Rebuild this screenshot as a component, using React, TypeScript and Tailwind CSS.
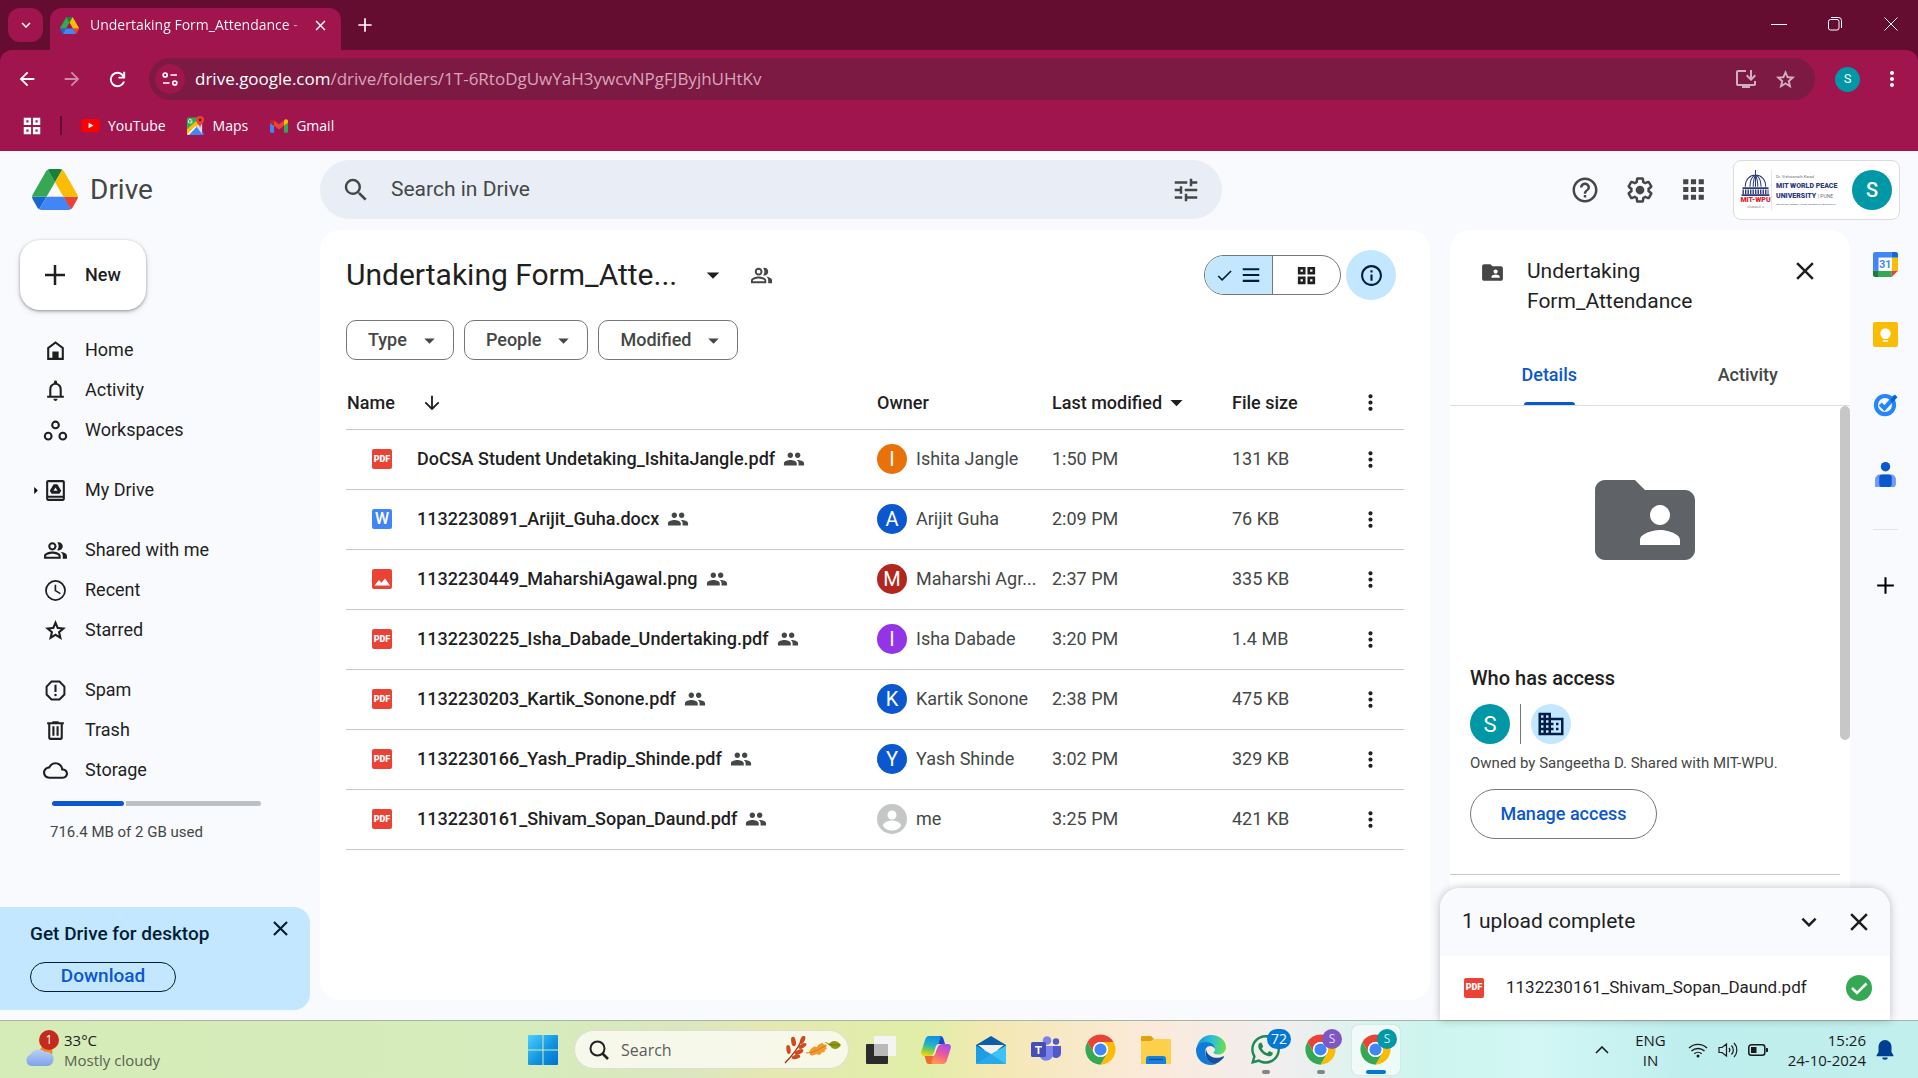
import type { ReactNode } from "react";
import { MdPeople, MdFolderShared, MdMoreVert, MdArrowDropDown, MdSearch, MdApps, MdHelpOutline } from "react-icons/md";
import { FaWhatsapp } from "react-icons/fa";

type P = { className?: string };

const Svg = ({ d, className = "size-6", box = "0 0 24 24" }: { d: string; className?: string; box?: string }) => (
  <svg viewBox={box} className={className} fill="currentColor" aria-hidden="true">
    <path fillRule="evenodd" d={d} />
  </svg>
);

const paths = {
  home: "M4 21V9l8-6 8 6v12H4zM6 10v9h3v-6h6v6h3v-9l-6-4.500z",
  bell: "M12 22c1.100 0 2-.9 2-2h-4c0 1.100.9 2 2 2zm6-6v-5c0-3.070-1.630-5.640-4.500-6.320V4c0-.83-.67-1.500-1.500-1.500s-1.500.67-1.500 1.500v.68C7.640 5.360 6 7.920 6 11v6H4v2h16v-2h-2v-1zm-2 1H8v-6c0-2.480 1.510-4.500 4-4.500s4 2.020 4 4.500v6z",
  workspaces:
    "M12 2.500a4.200 4.200 0 1 0 0 8.400 4.200 4.200 0 0 0 0-8.400zm0 2a2.200 2.200 0 1 1 0 4.400 2.200 2.200 0 0 1 0-4.400zM5 13.200a4.200 4.200 0 1 0 0 8.400 4.200 4.200 0 0 0 0-8.400zm0 2a2.200 2.200 0 1 1 0 4.400 2.200 2.200 0 0 1 0-4.400zM19 13.200a4.200 4.200 0 1 0 0 8.400 4.200 4.200 0 0 0 0-8.400zm0 2a2.200 2.200 0 1 1 0 4.400 2.200 2.200 0 0 1 0-4.400z",
  drive:
    "M19 2H5C3.900 2 3 2.900 3 4v16c0 1.100.9 2 2 2h14c1.100 0 2-.9 2-2V4c0-1.100-.9-2-2-2zm0 18H5v-1h14v1zm0-3H5V4h14v13zM10.200 6h3.600l3.700 6.200L15.700 15H8.300l-1.800-2.800L10.200 6zm1.800 3.100L10.100 12.300h3.800L12 9.100z",
  shared:
    "M15 8c0-1.420-.5-2.730-1.330-3.760.42-.14.86-.24 1.330-.24 2.210 0 4 1.790 4 4s-1.790 4-4 4c-.43 0-.84-.09-1.230-.21-.03-.01-.06-.02-.1-.03A5.980 5.980 0 0 0 15 8zm1.660 5.130C18.030 14.060 19 15.320 19 17v3h4v-3c0-2.180-3.580-3.470-6.340-3.870zM9 6a2 2 0 1 0 0 4 2 2 0 0 0 0-4m0 9c-2.700 0-5.800 1.290-6 2.010V18h12v-1c-.2-.71-3.300-2-6-2M9 4c2.210 0 4 1.790 4 4s-1.790 4-4 4-4-1.790-4-4 1.790-4 4-4zm0 9c2.670 0 8 1.340 8 4v3H1v-3c0-2.660 5.330-4 8-4z",
  recent:
    "M12 2a10 10 0 1 0 0 20 10 10 0 0 0 0-20zm0 18.300a8.300 8.300 0 1 1 0-16.600 8.300 8.300 0 0 1 0 16.600zM12.700 6.500h-1.600v6l5.200 3.200.8-1.300-4.400-2.700z",
  star: "M12 7.130l.97 2.290.47 1.110 1.200.1 2.470.21-1.880 1.630-.91.790.27 1.180.56 2.410-2.120-1.280-1.030-.64-1.030.62-2.120 1.280.56-2.410.27-1.180-.91-.79-1.880-1.630 2.470-.21 1.200-.1.47-1.110.97-2.270M12 2L9.190 8.630 2 9.240l5.460 4.730L5.820 21 12 17.270 18.180 21l-1.640-7.030L22 9.240l-7.190-.61L12 2z",
  spam: "M16.200 2.500H7.800L2.500 7.800v8.400l5.300 5.300h8.400l5.300-5.300V7.800L16.200 2.500zm3.400 12.900-4.200 4.200H8.600l-4.200-4.200V8.600l4.200-4.200h6.800l4.200 4.200v6.800zM11 6.500h2v7h-2zM12 15a1.200 1.200 0 1 0 0 2.400 1.200 1.200 0 0 0 0-2.400z",
  trash: "M15 4V3H9v1H4v2h1v13c0 1.100.9 2 2 2h10c1.100 0 2-.9 2-2V6h1V4h-5zm2 15H7V6h10v13zM9 8h2v9H9zm4 0h2v9h-2z",
  cloud:
    "M19.350 10.040C18.670 6.590 15.640 4 12 4 9.110 4 6.600 5.640 5.350 8.040 2.340 8.360 0 10.910 0 14c0 3.310 2.690 6 6 6h13c2.760 0 5-2.240 5-5 0-2.640-2.050-4.780-4.650-4.960zM19 18H6c-2.210 0-4-1.790-4-4s1.790-4 4-4h.71C7.370 7.690 9.480 6 12 6c3.040 0 5.500 2.460 5.500 5.500v.5H19c1.660 0 3 1.340 3 3s-1.340 3-3 3z",
  plus: "M20 13h-7v7h-2v-7H4v-2h7V4h2v7h7v2z",
  close: "M19 6.410L17.590 5 12 10.590 6.410 5 5 6.410 10.590 12 5 17.590 6.410 19 12 13.410 17.590 19 19 17.590 13.410 12z",
  down: "M7.410 8.590L12 13.170l4.590-4.580L18 10l-6 6-6-6z",
  arrowDown: "M20 12l-1.410-1.410L13 16.170V4h-2v12.170l-5.580-5.590L4 12l8 8z",
  grid: "M3 3v8h8V3H3zm5.200 5.200H5.800V5.800h2.400v2.400zM3 13v8h8v-8H3zm5.200 5.200H5.800v-2.400h2.400v2.400zM13 3v8h8V3h-8zm5.200 5.200h-2.400V5.800h2.400v2.400zM13 13v8h8v-8h-8zm5.200 5.200h-2.400v-2.400h2.400v2.400z",
  gear: "M13.850 22.250h-3.700c-.74 0-1.360-.54-1.450-1.270l-.27-1.890c-.27-.14-.53-.29-.79-.46l-1.800.72c-.7.260-1.470-.03-1.810-.65L2.200 15.530c-.35-.66-.2-1.440.36-1.880l1.530-1.190c-.01-.15-.02-.3-.02-.46 0-.15.010-.31.020-.46l-1.520-1.190c-.59-.45-.74-1.260-.37-1.880l1.850-3.190c.34-.62 1.110-.9 1.790-.63l1.810.73c.26-.17.52-.32.78-.46l.27-1.910c.09-.7.71-1.250 1.440-1.250h3.700c.74 0 1.360.54 1.450 1.270l.27 1.890c.27.140.53.290.79.460l1.800-.72c.71-.26 1.480.03 1.820.65l1.840 3.180c.36.660.2 1.440-.36 1.880l-1.520 1.190c.01.150.020.300.020.460s-.01.310-.02.460l1.520 1.190c.56.450.72 1.230.37 1.860l-1.860 3.220c-.34.620-1.110.9-1.800.63l-1.800-.72c-.26.170-.52.320-.78.460l-.27 1.910c-.1.680-.72 1.220-1.460 1.220zm-3.230-2h2.760l.37-2.550.53-.22c.44-.18.88-.44 1.340-.78l.45-.34 2.380.96 1.380-2.400-2.030-1.580.07-.56c.03-.26.060-.51.060-.78s-.03-.53-.06-.78l-.07-.56 2.030-1.580-1.390-2.400-2.390.96-.45-.35c-.42-.32-.87-.58-1.330-.77l-.52-.22-.37-2.550h-2.760l-.37 2.550-.53.210c-.44.190-.88.440-1.340.79l-.45.330-2.380-.95-1.390 2.390 2.030 1.580-.07.560a7 7 0 0 0-.06.790c0 .26.020.53.060.78l.07.560-2.030 1.580 1.380 2.400 2.390-.96.450.35c.43.330.860.580 1.330.77l.53.220.38 2.550zM12 8.500a3.500 3.500 0 1 0 0 7 3.500 3.500 0 0 0 0-7z",
  tune: "M3 17v2h6v-2H3zM3 5v2h10V5H3zm10 16v-2h8v-2h-8v-2h-2v6h2zM7 9v2H3v2h4v2h2V9H7zm14 4v-2H11v2h10zm-6-4h2V7h4V5h-4V3h-2v6z",
  check: "M9 16.200L4.800 12l-1.400 1.400L9 19 21 7l-1.400-1.400L9 16.200z",
  lines: "M3 4.500h18v2.200H3zM3 10.900h18v2.200H3zM3 17.300h18v2.200H3z",
  info: "M11 17h2v-6h-2v6zm1-15C6.480 2 2 6.480 2 12s4.480 10 10 10 10-4.480 10-10S17.520 2 12 2zm0 18c-4.410 0-8-3.590-8-8s3.590-8 8-8 8 3.590 8 8-3.590 8-8 8zM11 9h2V7h-2v2z",
  building:
    "M12 7V3H2v18h20V7H12zM6 19H4v-2h2v2zm0-4H4v-2h2v2zm0-4H4V9h2v2zm0-4H4V5h2v2zm4 12H8v-2h2v2zm0-4H8v-2h2v2zm0-4H8V9h2v2zm0-4H8V5h2v2zm10 12h-8v-2h2v-2h-2v-2h2v-2h-2V9h8v10zm-2-8h-2v2h2v-2zm0 4h-2v2h2v-2z",
  back: "M20 11H7.830l5.590-5.590L12 4l-8 8 8 8 1.410-1.410L7.830 13H20v-2z",
  forward: "M12 4l-1.410 1.410L16.170 11H4v2h12.170l-5.580 5.590L12 20l8-8z",
  reload: "M12 20q-3.350 0-5.670-2.320T4 12t2.330-5.680T12 4q1.730 0 3.300.71T18 6.750V4h2v7h-7V9h4.200q-.8-1.400-2.190-2.200T12 6Q9.500 6 7.750 7.750T6 12t1.750 4.250T12 18q1.930 0 3.480-1.100T17.650 14h2.100q-.7 2.650-2.850 4.330T12 20z",
  install: "M8 21v-2H4q-.82 0-1.410-.59T2 17V5q0-.82.59-1.410T4 3h8v2H4v12h16v-3h2v3q0 .82-.59 1.410T20 19h-4v2H8zm9-7-5-5 1.400-1.400 2.600 2.570V3h2v7.170l2.600-2.570L22 9z",
};

const DriveLogo = ({ className }: P) => (
  <svg viewBox="0 0 87.3 78" className={className} aria-hidden="true">
    <path d="m6.600 66.850 3.850 6.650c.8 1.400 1.950 2.500 3.300 3.300l13.750-23.800h-27.500c0 1.550.4 3.100 1.200 4.500z" fill="#1967d2" />
    <path d="m43.650 25-13.750-23.800c-1.350.8-2.500 1.900-3.300 3.300l-25.400 44a9.060 9.060 0 0 0 -1.200 4.500h27.500z" fill="#34a853" />
    <path d="m73.550 76.800c1.350-.8 2.500-1.900 3.300-3.300l1.600-2.750 7.650-13.250c.8-1.400 1.200-2.950 1.200-4.500h-27.502l5.852 11.500z" fill="#ea4335" />
    <path d="m43.650 25 13.750-23.800c-1.350-.8-2.900-1.200-4.500-1.200h-18.500c-1.600 0-3.150.45-4.500 1.200z" fill="#188038" />
    <path d="m59.800 53h-32.300l-13.750 23.800c1.350.8 2.900 1.200 4.500 1.200h50.800c1.600 0 3.150-.45 4.500-1.200z" fill="#4285f4" />
    <path d="m73.400 26.500-12.700-22c-.8-1.400-1.950-2.500-3.300-3.300l-13.750 23.800 16.150 28h27.450c0-1.550-.4-3.100-1.200-4.500z" fill="#fbbc04" />
  </svg>
);

const YouTube = () => (
  <svg viewBox="0 0 20 14" className="h-[13px] w-[19px]" aria-hidden="true">
    <rect width="20" height="14" rx="3.500" fill="#f00" />
    <path d="M8 4l5.200 3L8 10z" fill="#fff" />
  </svg>
);

const Maps = () => (
  <svg viewBox="0 0 20 20" className="size-[19px]" aria-hidden="true">
    <path d="M1 3.500A2 2 0 0 1 3 1.500h9L1 13z" fill="#34a853" />
    <path d="M1 2h11v9L1 19z" fill="#34a853" />
    <path d="M1 19 10 10l9 9-1 1H2z" fill="#4285f4" />
    <path d="M1 18.500V14L11 5l2 4L2 19.500z" fill="#fbbc04" />
    <path d="M1 19.500 10 10.500l1 1-8 8.500z" fill="#fff" />
    <path d="M10.500 10.500 17 7v12z" fill="#dadce0" />
    <path d="M14.800 0a4.200 4.200 0 0 0-4.200 4.200c0 3 3.400 4 4.200 8.300.8-4.300 4.200-5.300 4.200-8.300A4.200 4.200 0 0 0 14.800 0z" fill="#ea4335" />
    <circle cx="14.800" cy="4.200" r="1.500" fill="#811411" />
    <path d="M6.500 5.300H4.600m1.900 0A2 2 0 1 1 5.800 4" stroke="#fff" strokeWidth=".9" fill="none" />
  </svg>
);

const Gmail = () => (
  <svg viewBox="52 42 88 66" className="h-[14px] w-[18px]" aria-hidden="true">
    <path fill="#4285f4" d="M58 108h14V74L52 59v43c0 3.320 2.690 6 6 6" />
    <path fill="#34a853" d="M120 108h14c3.320 0 6-2.690 6-6V59l-20 15" />
    <path fill="#fbbc04" d="M120 48v26l20-15v-8c0-7.420-8.470-11.650-14.400-7.200" />
    <path fill="#ea4335" d="M72 74V48l24 18 24-18v26L96 92" />
    <path fill="#c5221f" d="M52 51v8l20 15V48l-5.600-4.200c-5.940-4.450-14.400-.22-14.400 7.200" />
  </svg>
);

const Chrome = () => (
  <svg viewBox="0 0 48 48" className="size-[33px]" aria-hidden="true">
    <path fill="#ea4335" d="M4.950 13A22 22 0 0 1 43.050 13H24A11 11 0 0 0 14.470 29.500z" />
    <path fill="#fbbc04" d="M43.050 13A22 22 0 0 1 24 46L33.530 29.500A11 11 0 0 0 24 13z" />
    <path fill="#34a853" d="M24 46A22 22 0 0 1 4.950 13L14.470 29.500A11 11 0 0 0 33.530 29.500z" />
    <circle cx="24" cy="24" r="11" fill="#fff" />
    <circle cx="24" cy="24" r="8.800" fill="#4285f4" />
  </svg>
);

const Windows = () => (
  <svg viewBox="0 0 30 30" className="size-[30px]" aria-hidden="true">
    <defs>
      <linearGradient id="win" x1="0" y1="0" x2="1" y2="1">
        <stop offset="0" stopColor="#4cd0ff" />
        <stop offset=".55" stopColor="#1394e0" />
        <stop offset="1" stopColor="#0072d0" />
      </linearGradient>
    </defs>
    <path fill="url(#win)" d="M1 0h13.500v14.500H0V1a1 1 0 0 1 1-1zM15.500 0H29a1 1 0 0 1 1 1v13.500H15.500zM0 15.500h14.500V30H1a1 1 0 0 1-1-1zM15.500 15.500H30V29a1 1 0 0 1-1 1H15.500z" />
  </svg>
);

const Leaves = () => (
  <svg viewBox="0 0 58 28" className="h-7 w-[58px]" aria-hidden="true">
    <path d="M1 27C8 20 14 12 18 4" stroke="#a3341c" strokeWidth="1.400" fill="none" />
    <g fill="#cf4a1c">
      <ellipse cx="9.500" cy="5.500" rx="2.300" ry="4.800" transform="rotate(-10 9.500 5.500)" />
      <ellipse cx="18.500" cy="4" rx="2.200" ry="4.500" transform="rotate(25 18.500 4)" />
      <ellipse cx="4.500" cy="13.500" rx="2.100" ry="4.500" transform="rotate(-8 4.500 13.500)" />
      <ellipse cx="18.500" cy="10" rx="1.900" ry="4.400" transform="rotate(60 18.500 10)" />
      <ellipse cx="15" cy="16" rx="2.100" ry="4.600" transform="rotate(65 15 16)" />
      <ellipse cx="12" cy="21" rx="2" ry="4.400" transform="rotate(78 12 21)" />
    </g>
    <path d="M19 17c3-1 4-1 6-1 1-3 4-5 6-6 0 1 1 1 2 1 1-3 4-4 6-4 0 2 2 1 4 2-1 2-1 3 0 4-2 0-3 2-2 3-3 0-4 1-5 3-2 0-3-1-4-1-1 1-4 2-6 1 0-1 0-2-1-3-2 0-4 1-6 1z" fill="#f49a2c" />
    <path d="M22 17c8 0 13-4 19-7" stroke="#c86a14" strokeWidth=".7" fill="none" />
    <path d="M40 6c2 0 3 0 5 2 3-4 8-4 12 1-3 5-8 5-11 1-2-2-3-3-6-4z" fill="#8f9a12" />
    <path d="M44 8c4 1 8 1 12 1" stroke="#5f6a08" strokeWidth=".7" fill="none" />
  </svg>
);

const TaskView = () => (
  <svg viewBox="0 0 30 28" className="h-7 w-[30px]" aria-hidden="true">
    <rect x="0" y="8" width="22" height="20" rx="1" fill="#2b2b2b" />
    <rect x="8" y="0" width="22" height="20" rx="1" fill="#f4f4f4" />
    <rect x="8" y="8" width="14" height="12" fill="#b9b9b9" />
  </svg>
);

const Copilot = () => (
  <svg viewBox="0 0 30 28" className="h-7 w-[30px]" aria-hidden="true">
    <defs>
      <linearGradient id="cpa" x1=".5" y1="0" x2=".3" y2="1">
        <stop offset="0" stopColor="#1090e8" />
        <stop offset=".45" stopColor="#24b6c0" />
        <stop offset=".75" stopColor="#8ccf3c" />
        <stop offset="1" stopColor="#fcd116" />
      </linearGradient>
      <linearGradient id="cpb" x1=".7" y1="0" x2=".3" y2="1">
        <stop offset="0" stopColor="#a44cf0" />
        <stop offset=".5" stopColor="#ee5a9a" />
        <stop offset="1" stopColor="#ff9a4a" />
      </linearGradient>
    </defs>
    <path d="M15 0h4c2 0 3 1 3.500 3L24 8h-7z" fill="#1a46c8" />
    <path d="M8 28c-2 0-2.500-1-3-3l-1.500-5H13l-1 8z" fill="#f06a30" />
    <path d="M8 0h9c2 0 3 1 2.500 2.500C17 7 15 20 9 20H3c-2.500 0-3.500-2-2.500-5L4 4c.8-2.500 2-4 4-4z" fill="url(#cpa)" />
    <path d="M22 28h-9c-2 0-3-1-2.500-2.500C13 21 15 8 21 8h6c2.500 0 3.500 2 2.500 5L26 24c-.8 2.500-2 4-4 4z" fill="url(#cpb)" />
    <path d="M15 10c1-1.500 2-2 3.500-2-2 2-3 6-4 9-.6 2-1.500 3-3.500 3 2-2 2.800-7 4-10z" fill="#f3efc2" />
  </svg>
);

const Mail = () => (
  <svg viewBox="0 0 30 28" className="h-7 w-[30px]" aria-hidden="true">
    <path d="M0 9 15 0l15 9v5H0z" fill="#0b5fa8" />
    <path d="M2 9h26L15 19z" fill="#f2f2f2" />
    <path d="M0 9.500 15 18 30 28H1a1 1 0 0 1-1-1z" fill="#1c9de4" />
    <path d="M30 9.500V27a1 1 0 0 1-1 1L15 18z" fill="#3cc3f5" />
    <path d="M0 28 15 18l15 10z" fill="#28a9ea" />
  </svg>
);

const Teams = () => (
  <svg viewBox="0 0 30 27" className="h-[27px] w-[30px]" aria-hidden="true">
    <circle cx="16" cy="4.500" r="4.300" fill="#7b83eb" />
    <circle cx="25" cy="5.500" r="3.200" fill="#5059c9" />
    <path d="M21 10h9v7a5 5 0 0 1-9 3z" fill="#5059c9" />
    <path d="M9 10h13v9a7 7 0 0 1-13 2z" fill="#7b83eb" />
    <rect y="6" width="15" height="15" rx="1.500" fill="#464eb8" />
    <path d="M4 10h7v1.600H8.400V18H6.600v-6.400H4z" fill="#fff" />
  </svg>
);

const Folder = () => (
  <svg viewBox="0 0 30 28" className="h-7 w-[30px]" aria-hidden="true">
    <path d="M0 1.500C0 .6.6 0 1.500 0H10l3 3-3 3H0z" fill="#e0a010" />
    <path d="M0 5h9.500L13 3h15.500c.9 0 1.500.6 1.500 1.500V28H0z" fill="#fcd04b" />
    <path d="M5 28v-5c0-2 1-3 3-3h14c2 0 3 1 3 3v5z" fill="#1681d8" />
    <path d="M8 23.500h14" stroke="#0a4f9a" strokeWidth="1.200" />
  </svg>
);

const Edge = () => (
  <svg viewBox="0 0 30 30" className="size-[30px]" aria-hidden="true">
    <defs>
      <linearGradient id="eda" x1="0" y1=".3" x2="1" y2=".4">
        <stop offset="0" stopColor="#1b8fdc" />
        <stop offset=".5" stopColor="#2bc0d8" />
        <stop offset="1" stopColor="#6be04a" />
      </linearGradient>
    </defs>
    <path d="M1 12C2 5 8 0 15 0c9 0 15 6 15 12 0 5-4 7.500-8 7.500-3 0-4.500-1-4.500-2 0-.8 1.500-1.200 1.500-3.500 0-3-3-5-7-5-5 0-10 2-11 3z" fill="url(#eda)" />
    <path d="M0 15c0-5 5-8 10-8 5.500 0 9 3 9 7-1-2-3-3-5-3-3 0-5 3-5 6 0 5 4 10 11 12-2 .8-4 1-5 1C7 30 0 24 0 15z" fill="#0f7bd6" />
    <path d="M10 14c-2 6 1 13 9 15 3-.8 7-4 9-7 .3-.7-.2-1-.8-.7C20 25 11 22 10 14z" fill="#154f9e" />
  </svg>
);

const WeatherIcon = () => (
  <span className="relative block h-9 w-9">
    <svg viewBox="0 0 36 36" className="size-9" aria-hidden="true">
      <defs>
        <linearGradient id="cl" x1="0" y1="0" x2="0" y2="1">
          <stop offset="0" stopColor="#b9d0f8" />
          <stop offset="1" stopColor="#7ea2ea" />
        </linearGradient>
      </defs>
      <circle cx="22" cy="20" r="6.500" fill="#f8861e" />
      <path d="M7 34a6 6 0 0 1-.5-11.500A9 9 0 0 1 21 20a7 7 0 1 1 3 14z" fill="url(#cl)" />
    </svg>
    <span className="absolute -top-0.5 left-[15px] flex size-5 items-center justify-center rounded-full bg-[#c42b1c] text-xs text-white">1</span>
  </span>
);

const Avatar = ({ letter, className }: { letter: string; className: string }) => (
  <span className={`flex shrink-0 items-center justify-center rounded-full text-white ${className}`}>{letter}</span>
);

const FileBadge = ({ kind }: { kind: string }) => {
  if (kind === "image")
    return (
      <svg viewBox="0 0 20 20" className="size-5 shrink-0" role="img" aria-label="Image">
        <rect width="20" height="20" rx="2" fill="#ea4335" />
        <path d="M2.500 16.500 7 11l2.500 2.800L13 9.500l5 7z" fill="#fff" />
      </svg>
    );
  if (kind === "word")
    return <span className="flex size-5 shrink-0 items-center justify-center rounded-xs bg-[#4285f4] text-base font-medium text-white">W</span>;
  return <span className="flex size-5 shrink-0 items-center justify-center rounded-xs bg-[#ea4335] text-[9px] font-black text-white">PDF</span>;
};

const files = [
  { name: "DoCSA Student Undetaking_IshitaJangle.pdf", kind: "pdf", owner: "Ishita Jangle", letter: "I", color: "bg-[#e8710a]", time: "1:50 PM", size: "131 KB" },
  { name: "1132230891_Arijit_Guha.docx", kind: "word", owner: "Arijit Guha", letter: "A", color: "bg-[#0b57d0]", time: "2:09 PM", size: "76 KB" },
  { name: "1132230449_MaharshiAgawal.png", kind: "image", owner: "Maharshi Agr...", letter: "M", color: "bg-[#b3261e]", time: "2:37 PM", size: "335 KB" },
  { name: "1132230225_Isha_Dabade_Undertaking.pdf", kind: "pdf", owner: "Isha Dabade", letter: "I", color: "bg-[#9334e6]", time: "3:20 PM", size: "1.4 MB" },
  { name: "1132230203_Kartik_Sonone.pdf", kind: "pdf", owner: "Kartik Sonone", letter: "K", color: "bg-[#0b57d0]", time: "2:38 PM", size: "475 KB" },
  { name: "1132230166_Yash_Pradip_Shinde.pdf", kind: "pdf", owner: "Yash Shinde", letter: "Y", color: "bg-[#0b57d0]", time: "3:02 PM", size: "329 KB" },
  { name: "1132230161_Shivam_Sopan_Daund.pdf", kind: "pdf", owner: "me", letter: "", color: "", time: "3:25 PM", size: "421 KB" },
];

const navGroups: { label: string; d: string; caret?: boolean }[][] = [
  [
    { label: "Home", d: paths.home },
    { label: "Activity", d: paths.bell },
    { label: "Workspaces", d: paths.workspaces },
  ],
  [{ label: "My Drive", d: paths.drive, caret: true }],
  [
    { label: "Shared with me", d: paths.shared },
    { label: "Recent", d: paths.recent },
    { label: "Starred", d: paths.star },
  ],
  [
    { label: "Spam", d: paths.spam },
    { label: "Trash", d: paths.trash },
    { label: "Storage", d: paths.cloud },
  ],
];

function BrowserChrome() {
  return (
    <div className="bg-[#640d31] font-['Open_Sans',sans-serif] text-sm text-white">
      <div className="flex h-[50px] items-end pl-2">
        <button aria-label="Search tabs" className="mb-2 flex h-[34px] w-[35px] items-center justify-center rounded-xl bg-[#a0154e]">
          <Svg d={paths.down} className="size-[18px]" />
        </button>
        <div className="ml-[7px] flex h-[42px] w-[291px] items-center rounded-t-xl bg-[#a0154e] pb-2 pl-2.5 pr-[9px]">
          <DriveLogo className="size-[19px]" />
          <span className="ml-[11px] flex-1 overflow-hidden whitespace-nowrap bg-linear-to-r from-white from-90% to-transparent bg-clip-text text-transparent">
            Undertaking Form_Attendance -
          </span>
          <button aria-label="Close tab" className="flex w-6 justify-center">
            <Svg d={paths.close} className="size-[17px]" />
          </button>
        </div>
        <button aria-label="New tab" className="mb-[15px] ml-3.5">
          <Svg d={paths.plus} className="size-5" />
        </button>
        <div className="mb-[18px] ml-auto mr-[19px] flex items-center gap-10">
          <button aria-label="Minimize" className="flex size-4 items-center">
            <span className="h-px w-full bg-white" />
          </button>
          <button aria-label="Restore">
            <svg viewBox="0 0 16 16" className="size-4" fill="none" stroke="#fff" aria-hidden="true">
              <rect x="1.500" y="3.500" width="10.500" height="10.500" rx="2" />
              <path d="M4 1.500h7.500a3 3 0 0 1 3 3V12" />
            </svg>
          </button>
          <button aria-label="Close window">
            <svg viewBox="0 0 16 16" className="size-4" stroke="#fff" aria-hidden="true">
              <path d="M1.500 1.500l13 13M14.500 1.500l-13 13" />
            </svg>
          </button>
        </div>
      </div>
      <div className="rounded-t-xl bg-[#a0154e]">
        <div className="flex items-center pl-4 pr-3.5 pt-2">
          <button aria-label="Back"><Svg d={paths.back} className="size-[22px]" /></button>
          <button aria-label="Forward" className="ml-[23px] opacity-50"><Svg d={paths.forward} className="size-[22px]" /></button>
          <button aria-label="Reload" className="ml-[23px]"><Svg d={paths.reload} className="size-[23px]" /></button>
          <div className="ml-5 flex h-[42px] flex-1 items-center rounded-full bg-[#7c1a43] pl-1.5 pr-[18px]">
            <button aria-label="Site information" className="flex size-[30px] items-center justify-center rounded-full bg-[#a0154e]">
              <svg viewBox="0 0 16 16" className="size-4" fill="none" stroke="#fff" strokeWidth="1.700" aria-hidden="true">
                <circle cx="3.200" cy="4" r="2" />
                <path d="M8.500 4H15M1 12h6.500" />
                <circle cx="12.800" cy="12" r="2" />
              </svg>
            </button>
            <div role="textbox" aria-label="Address" className="ml-2.5 flex-1 text-[17px]/6 text-[#d8a5b9]">
              <span className="text-white">drive.google.com</span>/drive/folders/1T-6RtoDgUwYaH3ywcvNPgFJByjhUHtKv
            </div>
            <button aria-label="Install app" className="text-[#d0b0bd]"><Svg d={paths.install} className="size-6" /></button>
            <button aria-label="Bookmark" className="ml-4 text-[#d0b0bd]"><Svg d={paths.star} className="size-[23px]" /></button>
          </div>
          <Avatar letter="S" className="ml-5 size-[25px] bg-[#0097a7] font-['Roboto'] text-[13px]" />
          <button aria-label="Menu" className="ml-5"><MdMoreVert className="size-6" /></button>
        </div>
        <div className="flex h-[51px] items-center pl-[21px]">
          <Svg d={paths.grid} className="size-[22px]" />
          <span className="ml-[17px] h-[19px] w-0.5 bg-[#640d31]" />
          <a href="#youtube" className="ml-[19px] flex items-center gap-2"><YouTube />YouTube</a>
          <a href="#maps" className="ml-5 flex items-center gap-2"><Maps />Maps</a>
          <a href="#gmail" className="ml-[22px] flex items-center gap-2"><Gmail />Gmail</a>
        </div>
      </div>
    </div>
  );
}

const UniversityLogo = () => (
  <span className="flex items-center bg-white">
    <span className="flex w-8 flex-col items-center border-r border-gray-200">
      <svg viewBox="0 0 30 28" className="h-[26px] w-[29px]" fill="none" stroke="#2b3a7c" strokeWidth="1.100" aria-hidden="true">
        <path d="M15 0v5M4 18C4 10 9 5.500 15 5.500S26 10 26 18M9 18c0-6 2-11 6-12.500C19 7 21 12 21 18M15 6v12M12.500 18c0-5 .8-9 2.500-12 1.700 3 2.500 7 2.500 12" />
        <path d="M1 19.500h28M0 27h30" strokeWidth="2" />
        <path d="M1 23.500h28" strokeWidth="5" strokeDasharray="1.500 1.200" />
      </svg>
      <span className="whitespace-nowrap text-[7px]/[9px] font-black text-[#e0202c]">MIT-WPU</span>
      <span className="whitespace-nowrap text-[3px]/[5px] text-gray-600">॥ विश्वशांती ॥</span>
    </span>
    <span className="flex flex-col items-start pl-1 text-[#2b3a7c]">
      <span className="whitespace-nowrap text-[4px]/[8px] text-gray-500">Dr. Vishwanath Karad</span>
      <span className="whitespace-nowrap text-[7px]/[10px] font-black">MIT WORLD PEACE</span>
      <span className="whitespace-nowrap text-[7px]/[10px] font-black">
        UNIVERSITY <span className="text-[5px] font-normal text-gray-500">| PUNE</span>
      </span>
      <span className="whitespace-nowrap text-[2px]/[6px] text-gray-600">TECHNOLOGY, RESEARCH, SOCIAL INNOVATION &amp; PARTNERSHIPS</span>
    </span>
  </span>
);

function Header() {
  return (
    <header className="flex h-[79px] shrink-0 items-center pb-0.5 pr-[18px] text-[#444746]">
      <a href="#drive" className="flex w-80 shrink-0 items-center pl-8">
        <DriveLogo className="h-[41px] w-[46px]" />
        <span className="ml-3 text-[28px]">Drive</span>
      </a>
      <form role="search" className="flex h-[59px] max-w-[902px] flex-1 items-center rounded-full bg-[#e9eef6] pl-[21px] pr-[21px]">
        <MdSearch className="size-[30px]" />
        <input aria-label="Search in Drive" placeholder="Search in Drive" className="ml-5 flex-1 bg-transparent text-[21px] outline-none placeholder:text-[#444746]" />
        <button type="button" aria-label="Advanced search"><Svg d={paths.tune} className="size-[30px]" /></button>
      </form>
      <div className="ml-auto flex items-center">
        <button aria-label="Support"><MdHelpOutline className="size-[30px]" /></button>
        <button aria-label="Settings" className="ml-[25px]"><Svg d={paths.gear} className="size-[30px]" /></button>
        <button aria-label="Google apps" className="ml-[23px]"><MdApps className="size-[31px]" /></button>
        <button aria-label="Account" className="ml-6 flex h-[60px] w-[167px] items-center justify-between rounded-lg border border-[#dadce0] bg-white pl-1.5 pr-[7px]">
          <UniversityLogo />
          <Avatar letter="S" className="size-10 bg-[#0097a7] text-xl font-medium" />
        </button>
      </div>
    </header>
  );
}

function Sidebar() {
  return (
    <aside className="flex w-80 shrink-0 flex-col pt-2.5 text-[#1f1f1f]">
      <button className="ml-5 flex h-[70px] w-[126px] items-center gap-[15px] rounded-[20px] bg-white pl-5 text-lg font-medium shadow-[0_1px_3px_rgba(0,0,0,0.35),0_2px_6px_rgba(0,0,0,0.12)]">
        <Svg d={paths.plus} className="size-[30px]" />
        New
      </button>
      <nav className="mt-5 flex flex-col gap-5 text-lg">
        {navGroups.map((group, i) => (
          <ul key={i}>
            {group.map((item) => (
              <li key={item.label}>
                <a href={`#${item.label}`} className="flex h-10 items-center">
                  <span className="flex w-[43px] justify-end">
                    {item.caret && <svg viewBox="0 0 4 8" className="mr-[5px] h-[7px] w-1" aria-hidden="true"><path d="M0 0l4 4-4 4z" /></svg>}
                  </span>
                  <Svg d={item.d} className="size-[25px]" />
                  <span className="ml-[17px]">{item.label}</span>
                </a>
              </li>
            ))}
          </ul>
        ))}
      </nav>
      <div className="ml-[50px] mt-[11px] w-[211px]">
        <div className="flex h-[5px] gap-0.5 pl-0.5">
          <span className="w-[72px] rounded-full bg-[#0b57d0]" />
          <span className="flex-1 rounded-r-full bg-[#bdc1c6]" />
        </div>
        <p className="mt-[15px] text-[15px] text-[#444746]">716.4 MB of 2 GB used</p>
      </div>
      <div className="mb-2.5 mr-2.5 mt-auto flex h-[103px] justify-between rounded-r-2xl bg-[#c2e7ff] pl-[30px] pr-[17px] pt-[15px] text-[#001d35]">
        <div className="flex flex-col items-start">
          <p className="text-[19px]/6 font-medium">Get Drive for desktop</p>
          <button className="mt-4 flex h-[30px] w-[146px] items-center justify-center rounded-full border border-[#001d35] pb-0.5 text-[19px] font-medium text-[#0b57d0]">Download</button>
        </div>
        <button aria-label="Dismiss" className="-mt-1.5 self-start"><Svg d={paths.close} className="size-[25px]" /></button>
      </div>
    </aside>
  );
}

const Th = ({ children, className = "" }: { children?: ReactNode; className?: string }) => (
  <th scope="col" className={`h-[52px] p-0 text-left font-medium ${className}`}>{children}</th>
);

function FileList() {
  return (
    <main className="mb-5 min-w-0 flex-1 rounded-[20px] bg-white px-[26px] pt-5 text-lg text-[#1f1f1f]">
      <div className="flex h-[50px] items-center">
        <h1 className="text-[30px]">
          <button className="flex items-center">
            Undertaking Form_Atte...
            <MdArrowDropDown className="ml-[21px] size-[30px]" />
          </button>
        </h1>
        <button aria-label="Manage sharing" className="ml-[22px] text-[#444746]"><Svg d={paths.shared} className="size-[23px]" /></button>
        <div className="ml-auto flex h-10 w-[137px] overflow-hidden rounded-full border border-[#747775]">
          <button aria-label="List layout" aria-pressed="true" className="flex flex-1 items-center justify-center gap-1.5 border-r border-[#747775] bg-[#c2e7ff] text-[#001d35]">
            <Svg d={paths.check} className="size-[19px]" />
            <Svg d={paths.lines} className="size-[22px]" />
          </button>
          <button aria-label="Grid layout" className="flex flex-1 items-center justify-center"><Svg d={paths.grid} className="size-[23px]" /></button>
        </div>
        <button aria-label="View details" className="ml-[5px] mr-2 flex size-[50px] items-center justify-center rounded-full bg-[#c2e7ff] text-[#001d35]">
          <Svg d={paths.info} className="size-[25px]" />
        </button>
      </div>
      <div className="mt-5 flex gap-2.5 text-[#444746]">
        {["Type", "People", "Modified"].map((f) => (
          <button key={f} aria-haspopup="menu" className="flex h-10 items-center rounded-[10px] border border-[#747775] pl-[21px] pr-[11px] font-medium">
            {f}
            <MdArrowDropDown className="ml-2.5 size-[25px]" />
          </button>
        ))}
      </div>
      <table className="mt-[17px] w-full table-fixed border-collapse">
        <colgroup>
          <col />
          <col className="w-[175px]" />
          <col className="w-[180px]" />
          <col className="w-[105px]" />
          <col className="w-[67px]" />
        </colgroup>
        <thead>
          <tr className="border-b border-[#c7c7c7]">
            <Th>
              <span className="flex items-center pl-px">Name<Svg d={paths.arrowDown} className="ml-[26px] size-[22px]" /></span>
            </Th>
            <Th>Owner</Th>
            <Th>
              <span className="flex items-center">Last modified<MdArrowDropDown className="size-[29px]" /></span>
            </Th>
            <Th>File size</Th>
            <Th><button aria-label="More options" className="mx-auto block"><MdMoreVert className="size-[25px]" /></button></Th>
          </tr>
        </thead>
        <tbody className="text-[#444746]">
          {files.map((f) => (
            <tr key={f.name} className="h-[60px] border-b border-[#c7c7c7]">
              <td className="p-0">
                <span className="flex items-center pl-[26px]">
                  <FileBadge kind={f.kind} />
                  <span className="ml-[25px] font-medium text-[#1f1f1f]">{f.name}</span>
                  <MdPeople className="ml-2 size-[22px]" />
                </span>
              </td>
              <td className="p-0">
                <span className="flex items-center">
                  {f.letter ? (
                    <Avatar letter={f.letter} className={`size-[30px] text-xl ${f.color}`} />
                  ) : (
                    <svg viewBox="0 0 30 30" className="size-[30px] shrink-0" aria-hidden="true">
                      <circle cx="15" cy="15" r="15" fill="#c4c7c5" />
                      <circle cx="15" cy="11" r="4.500" fill="#fff" />
                      <path d="M6 22c0-4 6-5.500 9-5.500s9 1.500 9 5.500c-2 3-5.500 4.500-9 4.500S8 25 6 22z" fill="#fff" />
                    </svg>
                  )}
                  <span className="ml-[9px] whitespace-nowrap">{f.owner}</span>
                </span>
              </td>
              <td className="p-0">{f.time}</td>
              <td className="p-0">{f.size}</td>
              <td className="p-0"><button aria-label={`Actions for ${f.name}`} className="mx-auto block text-[#1f1f1f]"><MdMoreVert className="size-[25px]" /></button></td>
            </tr>
          ))}
        </tbody>
      </table>
    </main>
  );
}

function DetailsPanel() {
  return (
    <section aria-label="Details" className="ml-5 flex w-[400px] shrink-0 flex-col overflow-hidden rounded-t-[20px] bg-white text-[#1f1f1f]">
      <div className="flex items-start pl-[30px] pr-[30px] pt-[26px]">
        <MdFolderShared className="mt-1 size-[25px] text-[#444746]" />
        <h2 className="ml-[22px] flex-1 text-[21px]/[30px]">Undertaking<br />Form_Attendance</h2>
        <button aria-label="Close details"><Svg d={paths.close} className="size-[30px]" /></button>
      </div>
      <div role="tablist" className="mt-7 flex h-[62px] border-b border-[#dadce0] pr-[3px] text-lg font-medium">
        <button role="tab" aria-selected="true" className="flex flex-1 justify-center text-[#0b57d0]">
          <span className="flex h-full flex-col items-center justify-between pt-[17px]">
            Details
            <span className="h-[3px] w-[51px] rounded-t bg-[#0b57d0]" />
          </span>
        </button>
        <button role="tab" aria-selected="false" className="flex flex-1 justify-center pt-[17px] text-[#444746]">Activity</button>
      </div>
      <div className="flex min-h-0 flex-1">
        <div className="min-w-0 flex-1 overflow-hidden">
          <div className="flex justify-center pt-[54px]"><MdFolderShared className="size-[120px] text-[#5f6368]" /></div>
          <div className="px-5">
            <h3 className="mt-[84px] text-xl/7 font-medium">Who has access</h3>
            <div className="mt-3 flex">
              <Avatar letter="S" className="size-10 bg-[#0097a7] text-[22px]" />
              <span className="mx-2.5 w-px bg-[#747775]" />
              <span className="flex size-10 items-center justify-center rounded-full bg-[#c2e7ff] text-[#041e49]"><Svg d={paths.building} className="size-[30px]" /></span>
            </div>
            <p className="mt-2 whitespace-nowrap text-[15px]/[22px] text-[#444746]">Owned by Sangeetha D. Shared with MIT-WPU.</p>
            <button className="mt-[15px] flex h-[50px] w-[187px] items-center justify-center rounded-full border border-[#747775] text-lg font-medium text-[#0b57d0]">Manage access</button>
          </div>
          <hr className="mt-[35px] border-[#c7c7c7]" />
        </div>
        <div className="h-[334px] w-2.5 rounded-full bg-[#c7c7c7]" />
      </div>
    </section>
  );
}

function AppRail() {
  return (
    <nav aria-label="Side panel" className="flex w-[68px] shrink-0 flex-col items-center pl-0.5 pt-[22px]">
      <button aria-label="Calendar">
        <svg viewBox="0 0 24 24" className="size-[25px]" aria-hidden="true">
          <path d="M0 2a2 2 0 0 1 2-2h16v5.500H5.500V18H0z" fill="#4285f4" />
          <path d="M18 0h4a2 2 0 0 1 2 2v3.500h-6z" fill="#1967d2" />
          <path d="M18 5.500h6V18h-6z" fill="#fbbc04" />
          <path d="M5.500 18H18v6H5.500z" fill="#34a853" />
          <path d="M0 18h5.500v6H2a2 2 0 0 1-2-2z" fill="#188038" />
          <path d="M18 18h6l-6 6z" fill="#ea4335" />
          <path d="M5.500 5.500H18V18H5.500z" fill="#fff" />
          <text x="11.800" y="15.500" textAnchor="middle" fontSize="10" fontWeight="700" fontFamily="Roboto" fill="#4285f4">31</text>
        </svg>
      </button>
      <button aria-label="Keep" className="mt-[45px]">
        <svg viewBox="0 0 24 24" className="size-[25px]" aria-hidden="true">
          <rect width="24" height="24" rx="2" fill="#fbbc04" />
          <circle cx="12" cy="11" r="5" fill="#fff" />
          <path d="M9.500 13h5v3h-5zM9.500 17.500h5V19h-5z" fill="#fff" />
        </svg>
      </button>
      <button aria-label="Tasks" className="mt-[45px]">
        <svg viewBox="0 0 24 24" className="size-[25px]" aria-hidden="true">
          <circle cx="11.500" cy="12.500" r="8.700" fill="none" stroke="#2684fc" strokeWidth="4" />
          <path d="M7 11.500l4 4L21 4.500" stroke="#2684fc" strokeWidth="4" fill="none" />
          <path d="M16.500 7.500 21 2.500l2.500 2.500-5 5z" fill="#0066da" />
        </svg>
      </button>
      <button aria-label="Contacts" className="mt-[45px]">
        <svg viewBox="0 0 24 24" className="size-[25px]" aria-hidden="true">
          <circle cx="12" cy="4.500" r="4.500" fill="#0b57d0" />
          <path d="M7 12h10c3 0 5 2 5 5v4a3 3 0 0 1-3 3H2v-7c0-3 2-5 5-5z" fill="#6f9cf8" />
          <path d="M9 12h6c2 0 3 1 3 3v6c0 2-1 3-3 3H9c-2 0-3-1-3-3v-6c0-2 1-3 3-3z" fill="#0b57d0" />
        </svg>
      </button>
      <span className="mt-[42px] h-px w-[25px] bg-[#e0e3e7]" />
      <button aria-label="Get add-ons" className="mt-[43px]"><Svg d={paths.plus} className="size-[25px]" /></button>
    </nav>
  );
}

function UploadToast() {
  return (
    <div role="status" className="absolute bottom-0 right-7 w-[450px] overflow-hidden rounded-t-[20px] bg-white text-[#1f1f1f] shadow-[0_0_8px_rgba(0,0,0,0.25)]">
      <div className="flex h-[68px] items-center bg-[#f8fafd] pl-[22px] pr-4">
        <span className="flex-1 text-[21px]">1 upload complete</span>
        <button aria-label="Minimize uploads"><Svg d={paths.down} className="size-[30px]" /></button>
        <button aria-label="Close uploads" className="ml-5"><Svg d={paths.close} className="size-[30px]" /></button>
      </div>
      <div className="flex h-16 items-center pl-6 pr-[18px] text-[17px]">
        <FileBadge kind="pdf" />
        <span className="ml-[22px] flex-1">1132230161_Shivam_Sopan_Daund.pdf</span>
        <svg viewBox="0 0 26 26" className="size-[26px]" aria-label="Complete">
          <circle cx="13" cy="13" r="13" fill="#34a853" />
          <path d="M6 13l5 5 9.500-9.500" stroke="#fff" strokeWidth="2.600" fill="none" />
        </svg>
      </div>
    </div>
  );
}

const TaskItem = ({ label, children, mark, active }: { label: string; children: ReactNode; mark?: boolean; active?: boolean }) => (
  <button aria-label={label} className="relative flex h-full w-[55px] items-center justify-center">
    <span className={active ? "flex h-[50px] w-12 items-center justify-center rounded-md bg-white/60 shadow-[0_0_1px_rgba(0,0,0,0.3)]" : "flex"}>{children}</span>
    {mark && <span className="absolute bottom-1 h-1 w-2 rounded-full bg-[#858585]" />}
    {active && <span className="absolute bottom-1 h-1 w-5 rounded-full bg-[#0078d4]" />}
  </button>
);

function Taskbar() {
  return (
    <footer className="flex h-[58px] shrink-0 items-center border-t border-[#a9b5a4] bg-[linear-gradient(90deg,#d5ecb8_0%,#d6ecbc_28%,#dce6c0_36%,#e6e8b2_40%,#e0eea8_48%,#f4e8b4_52%,#fbeadb_60%,#f0efef_67%,#cdf5ee_74%,#d2f7f5_80%,#bfeeee_88%,#c0efed_100%)] font-['Open_Sans',sans-serif] text-[15px]/5 text-[#1b1b1b]">
      <button className="flex flex-1 basis-0 items-center pl-6 text-left">
        <WeatherIcon />
        <span className="ml-1">33°C<br /><span className="text-[#5a6250]">Mostly cloudy</span></span>
      </button>
      <TaskItem label="Start"><Windows /></TaskItem>
      <label className="mx-1 flex h-[39px] w-[275px] items-center rounded-full border border-black/10 bg-[#f8faee]/90 pl-3.5 pr-1.5">
        <svg viewBox="0 0 20 20" className="size-5" fill="none" stroke="#222" strokeWidth="2" aria-hidden="true">
          <circle cx="8.500" cy="8.500" r="7" />
          <path d="M13.500 13.500L19 19" strokeWidth="2.600" />
        </svg>
        <input aria-label="Search" placeholder="Search" className="ml-3 w-0 flex-1 bg-transparent text-base outline-none placeholder:text-[#5c5c5c]" />
        <Leaves />
      </label>
      <TaskItem label="Task view"><TaskView /></TaskItem>
      <TaskItem label="Copilot"><Copilot /></TaskItem>
      <TaskItem label="Mail"><Mail /></TaskItem>
      <TaskItem label="Teams"><Teams /></TaskItem>
      <TaskItem label="Chrome"><Chrome /></TaskItem>
      <TaskItem label="File Explorer"><Folder /></TaskItem>
      <TaskItem label="Edge"><Edge /></TaskItem>
      <TaskItem label="WhatsApp" mark>
        <FaWhatsapp className="size-[33px] text-[#1d8a55]" />
        <span className="absolute right-0.5 top-2 flex h-5 items-center rounded-full bg-[#0078d4] px-1 text-sm text-white">72</span>
      </TaskItem>
      <TaskItem label="Chrome, profile 1" mark>
        <Chrome />
        <span className="absolute right-1.5 top-2 flex size-5 items-center justify-center rounded-full bg-[#7e57c2] text-xs text-[#e4d8f8]">S</span>
      </TaskItem>
      <TaskItem label="Chrome, profile 2" active>
        <Chrome />
        <span className="absolute right-1.5 top-2 flex size-5 items-center justify-center rounded-full bg-[#0097a7] text-xs text-[#c8f0f4]">S</span>
      </TaskItem>
      <div className="flex flex-1 basis-0 items-center justify-end pr-6">
        <svg viewBox="0 0 14 8" className="h-2 w-3.5" fill="none" stroke="#1b1b1b" strokeWidth="1.600" aria-hidden="true"><path d="M1 7l6-6 6 6" /></svg>
        <span className="ml-[26px] text-center">ENG<br />IN</span>
        <svg viewBox="0 0 20 16" className="ml-[22px] h-4 w-5" fill="none" stroke="#1b1b1b" strokeWidth="1.400" aria-hidden="true">
          <path d="M1 6a13 13 0 0 1 18 0M3.500 9a9.500 9.500 0 0 1 13 0M6.300 11.800a5.500 5.500 0 0 1 7.400 0" />
          <circle cx="10" cy="14" r="1.500" fill="#1b1b1b" stroke="none" />
        </svg>
        <svg viewBox="0 0 20 16" className="ml-2.5 h-4 w-5" fill="none" stroke="#1b1b1b" strokeWidth="1.200" aria-hidden="true">
          <path d="M1 5.500h3L8.500 2v12L4 10.500H1zM11 6a3 3 0 0 1 0 4M13.500 3.500a6.500 6.500 0 0 1 0 9M16 1a10 10 0 0 1 0 14" />
        </svg>
        <svg viewBox="0 0 20 14" className="ml-2.5 h-3.5 w-5" aria-hidden="true">
          <rect x=".8" y="1.800" width="16" height="10.400" rx="2.500" fill="none" stroke="#1b1b1b" strokeWidth="1.500" />
          <rect x="3" y="4" width="5.500" height="6" fill="#1b1b1b" />
          <path d="M18 5h1.200a.8.800 0 0 1 .8.800v2.400a.8.800 0 0 1-.8.800H18z" fill="#1b1b1b" />
        </svg>
        <span className="ml-5 text-right">15:26<br />24-10-2024</span>
        <svg viewBox="0 0 18 20" className="ml-2.5 h-5 w-[18px]" fill="#003e92" aria-hidden="true">
          <path d="M9 0a6.500 6.500 0 0 0-6.500 6.500V12L.6 15.200c-.3.500 0 1.100.6 1.100h15.600c.6 0 .9-.6.600-1.100L15.500 12V6.500A6.500 6.500 0 0 0 9 0zM6.300 17.500h5.400a2.700 2.200 0 0 1-5.400 0z" />
        </svg>
      </div>
    </footer>
  );
}

export default function App() {
  return (
    <div className="flex h-screen flex-col bg-[#f8fafd] font-['Roboto',sans-serif]">
      <BrowserChrome />
      <div className="relative flex min-h-0 flex-1 flex-col">
        <Header />
        <div className="flex min-h-0 flex-1">
          <Sidebar />
          <FileList />
          <DetailsPanel />
          <AppRail />
        </div>
        <UploadToast />
      </div>
      <Taskbar />
    </div>
  );
}
